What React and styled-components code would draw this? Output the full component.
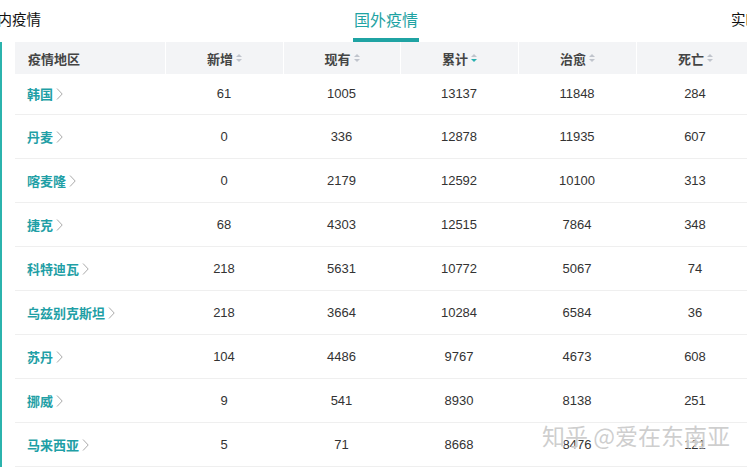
import React from "react";
import styled, { createGlobalStyle } from "styled-components";

const GlobalStyle = createGlobalStyle`
  html, body { margin: 0; padding: 0; background: #fff; }
  body {
    font-family: "Liberation Sans", "Noto Sans CJK SC", sans-serif;
    width: 747px;
    height: 467px;
    overflow: hidden;
  }
`;

const Page = styled.div`
  position: relative;
  width: 747px;
  height: 467px;
  overflow: hidden;
`;

const Tabs = styled.div`
  display: flex;
  gap: 311px;
  height: 42px;
  margin-left: -18px;
  white-space: nowrap;
`;

const TabLabel = styled.div`
  flex: none;
  height: 42px;
  box-sizing: border-box;
  padding: ${(p) => (p.active ? "7px" : "8px")} 1px 0;
  font-size: ${(p) => (p.active ? "16px" : "14.5px")};
  color: ${(p) => (p.active ? "#1fa3a3" : "#111")};
  border-bottom: 4px solid ${(p) => (p.active ? "#1fa3a3" : "transparent")};
`;

const Body = styled.div`
  border-left: 2px solid #2bb3ad;
  padding-left: 13px;
  height: 425px;
`;

const Table = styled.div`
  display: grid;
  grid-template-columns: 150px 118px 117px 118px 118px 118px;
`;

const HeadCell = styled.div`
  height: 32px;
  background: #f3f4f6;
  border-left: ${(p) => (p.first ? "none" : "1px solid #fff")};
  display: flex;
  align-items: center;
  justify-content: ${(p) => (p.first ? "flex-start" : "center")};
  padding-left: ${(p) => (p.first ? "13px" : "0")};
  font-size: 13px;
  font-weight: bold;
  color: #444;
`;

const SortIcon = styled.svg`
  margin-left: 3px;
  width: 6px;
  height: 10px;
`;

const Cell = styled.div`
  height: ${(p) => (p.top ? "41px" : "44px")};
  border-bottom: 1px solid #efefef;
  box-sizing: border-box;
  display: flex;
  align-items: center;
  justify-content: ${(p) => (p.first ? "flex-start" : "center")};
  padding-left: ${(p) => (p.first ? "12px" : "0")};
  padding-bottom: ${(p) => (p.top ? "1px" : "0")};
  font-size: 13px;
  color: #333;
`;

const Region = styled.span`
  color: #1f9fa6;
  font-weight: bold;
  font-size: 13px;
`;

const Chevron = styled.svg`
  width: 7px;
  height: 12px;
  margin-left: 3px;
`;

const Watermark = styled.div`
  position: absolute;
  left: 542px;
  top: 418px;
  font-family: "Noto Sans CJK SC", sans-serif;
  font-size: 23px;
  color: rgba(185, 185, 185, 0.7);
  text-shadow: 0 0 1px #fff, 1px 1px 0 rgba(255, 255, 255, 0.6);
  white-space: pre;
`;

const columns = ["疫情地区", "新增", "现有", "累计", "治愈", "死亡"];

const rows = [
  ["韩国", 61, 1005, 13137, 11848, 284],
  ["丹麦", 0, 336, 12878, 11935, 607],
  ["喀麦隆", 0, 2179, 12592, 10100, 313],
  ["捷克", 68, 4303, 12515, 7864, 348],
  ["科特迪瓦", 218, 5631, 10772, 5067, 74],
  ["乌兹别克斯坦", 218, 3664, 10284, 6584, 36],
  ["苏丹", 104, 4486, 9767, 4673, 608],
  ["挪威", 9, 541, 8930, 8138, 251],
  ["马来西亚", 5, 71, 8668, 8476, 121],
];

function Sort({ active }) {
  return (
    <SortIcon viewBox="0 0 6 10">
      <path d="M0 4 L3 1 L6 4 Z" fill="#c0c4cc" />
      <path d="M0 6 L3 9 L6 6 Z" fill={active ? "#2ab0b0" : "#c0c4cc"} />
    </SortIcon>
  );
}

export default function App() {
  return (
    <Page>
      <GlobalStyle />
      <Tabs>
        <TabLabel>国内疫情</TabLabel>
        <TabLabel active>国外疫情</TabLabel>
        <TabLabel>实时播报</TabLabel>
      </Tabs>
      <Body>
        <Table>
          {columns.map((c, i) => (
            <HeadCell key={c} first={i === 0}>
              {c}
              {i > 0 && <Sort active={i === 3} />}
            </HeadCell>
          ))}
          {rows.map((r, ri) =>
            r.map((v, ci) => (
              <Cell key={ri + "-" + ci} first={ci === 0} top={ri === 0}>
                {ci === 0 ? (
                  <>
                    <Region>{v}</Region>
                    <Chevron viewBox="0 0 7 12">
                      <path d="M1 0.5 L6.2 6 L1 11.5" fill="none" stroke="#aaa" strokeWidth="1" />
                    </Chevron>
                  </>
                ) : (
                  v
                )}
              </Cell>
            ))
          )}
        </Table>
      </Body>
      <Watermark>知乎 @爱在东南亚</Watermark>
    </Page>
  );
}
